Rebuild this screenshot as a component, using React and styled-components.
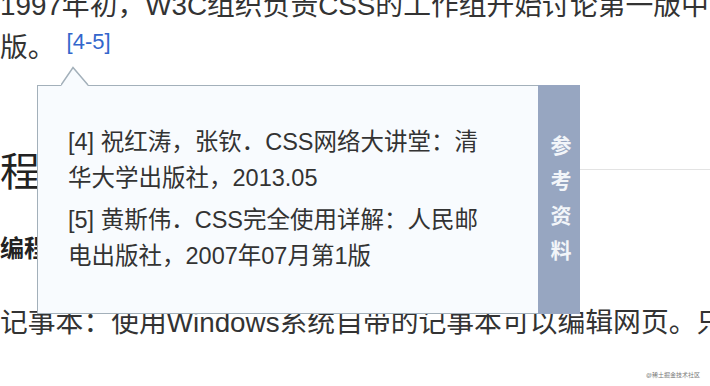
import React from 'react';
import styled, { createGlobalStyle } from 'styled-components';

const GlobalStyle = createGlobalStyle`
  html, body {
    margin: 0;
    padding: 0;
    background: #fff;
    overflow: hidden;
  }
  body {
    font-family: "Liberation Sans", "Noto Sans CJK SC", sans-serif;
    color: #333;
  }
`;

const App = () => {
  return (
    <Page>
      <GlobalStyle />
      <Article>
        <TextLine>1997年初，W3C组织负责CSS的工作组开始讨论第一版中</TextLine>
        <TextLine>
          版。<Ref>[4-5]</Ref>
        </TextLine>
        <Heading>
          <HeadingText>程序设计</HeadingText>
          <HeadingRule />
        </Heading>
        <SubHeading>编程工具</SubHeading>
        <TextLine $gap>记事本：使用Windows系统自带的记事本可以编辑网页。只需</TextLine>
      </Article>

      <Popup>
        <Arrow width='28' height='20' viewBox='0 0 28 20'>
          <polygon points='0,20 12,1.5 27,20' fill='#f8fbfe' />
          <polyline points='0,19 12,1.5 27,19' fill='none' stroke='#a3b0ba' strokeWidth='1.5' />
        </Arrow>
        <PopupBody>
          <Cite>
            <CiteLine>[4] 祝红涛，张钦．CSS网络大讲堂：清</CiteLine>
            <CiteLine>华大学出版社，2013.05</CiteLine>
          </Cite>
          <Cite>
            <CiteLine>[5] 黄斯伟．CSS完全使用详解：人民邮</CiteLine>
            <CiteLine>电出版社，2007年07月第1版</CiteLine>
          </Cite>
        </PopupBody>
        <SideTab>参考资料</SideTab>
      </Popup>

      <Watermark>@稀土掘金技术社区</Watermark>
    </Page>
  );
};

export default App;

const Page = styled.div`
  position: relative;
  width: 710px;
  height: 386px;
  overflow: hidden;
`;

const Article = styled.div`
  margin-top: -15px;
`;

const TextLine = styled.div`
  font-size: 27.8px;
  line-height: 42px;
  white-space: nowrap;
  color: #333;
  margin-top: ${(p) => (p.$gap ? '37px' : '0')};
`;

const Ref = styled.span`
  display: inline-block;
  margin-left: 11px;
  font-size: 22px;
  line-height: 24px;
  color: #3366cc;
  vertical-align: 8px;
`;

const Heading = styled.h2`
  display: flex;
  align-items: center;
  margin: 75px 0 0;
  height: 50px;
  font-size: 40px;
  font-weight: normal;
  color: #222;
`;

const HeadingText = styled.span`
  white-space: nowrap;
`;

const HeadingRule = styled.span`
  flex: 1;
  height: 1px;
  margin-left: 12px;
  background: #e3e3e3;
`;

const SubHeading = styled.h3`
  margin: 39px 0 0;
  font-size: 24px;
  line-height: 32px;
  font-weight: bold;
  color: #222;
`;

const Popup = styled.div`
  position: absolute;
  left: 37px;
  top: 85px;
  width: 543px;
  height: 229px;
  display: flex;
`;

const Arrow = styled.svg`
  position: absolute;
  left: 24px;
  top: -19px;
  z-index: 1;
`;

const PopupBody = styled.div`
  flex: 1;
  box-sizing: border-box;
  padding: 38px 0 0 30px;
  background: #f8fbfe;
  border: 1px solid #a3b0ba;
  border-right: none;
`;

const Cite = styled.div`
  font-size: 23.5px;
  line-height: 36px;
  color: #333;

  & + & {
    margin-top: 6px;
  }
`;

const CiteLine = styled.span`
  display: block;
  white-space: nowrap;
`;

const SideTab = styled.div`
  width: 42px;
  box-sizing: border-box;
  padding-top: 50px;
  background: #97a6c1;
  color: #f2f5f9;
  font-size: 21px;
  font-weight: bold;
  letter-spacing: 14px;
  writing-mode: vertical-rl;
  display: flex;
  align-items: center;
`;

const Watermark = styled.div`
  position: absolute;
  right: 10px;
  bottom: 7px;
  font-size: 6px;
  color: #7a7a7a;
`;
